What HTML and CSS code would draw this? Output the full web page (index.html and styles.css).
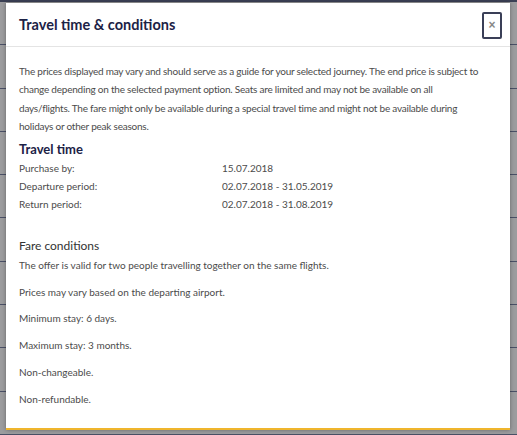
FILE: index.html
```html
<!DOCTYPE html>
<html lang="en">
<head>
<meta charset="utf-8">
<title>Travel time &amp; conditions</title>
<link rel="stylesheet" href="styles.css">
</head>
<body>
<div class="backdrop">
  <div class="bg-row"></div>
  <div class="bg-row"></div>
  <div class="bg-row"></div>
  <div class="bg-row"></div>
  <div class="bg-row"></div>
  <div class="bg-row"></div>
  <div class="bg-row"></div>
  <div class="bg-row"></div>
  <div class="bg-row"></div>
  <div class="bg-row"></div>
</div>

<div class="modal" role="dialog" aria-labelledby="modal-title">
  <header class="modal-header">
    <h1 id="modal-title" class="modal-title">Travel time &amp; conditions</h1>
    <button class="close-btn" aria-label="Close">&times;</button>
  </header>
  <div class="modal-body">
    <p class="intro">The prices displayed may vary and should serve as a guide for your selected journey. The end price is subject to<br>
    change depending on the selected payment option. Seats are limited and may not be available on all<br>
    days/flights. The fare might only be available during a special travel time and might not be available during<br>
    holidays or other peak seasons.</p>

    <h2 class="section-title">Travel time</h2>
    <dl class="dates">
      <dt>Purchase by:</dt><dd>15.07.2018</dd>
      <dt>Departure period:</dt><dd>02.07.2018 - 31.05.2019</dd>
      <dt>Return period:</dt><dd>02.07.2018 - 31.08.2019</dd>
    </dl>

    <h3 class="fare-title">Fare conditions</h3>
    <p class="cond">The offer is valid for two people travelling together on the same flights.</p>
    <p class="cond">Prices may vary based on the departing airport.</p>
    <p class="cond">Minimum stay: 6 days.</p>
    <p class="cond">Maximum stay: 3 months.</p>
    <p class="cond">Non-changeable.</p>
    <p class="cond">Non-refundable.</p>
  </div>
</div>
</body>
</html>
```

FILE: styles.css
```css
* { box-sizing: border-box; }

html, body {
  margin: 0;
  height: 100%;
}

body {
  background: #9c9c9e;
  font-family: Lato, "Liberation Sans", sans-serif;
  overflow: hidden;
  position: relative;
}

/* dimmed page behind the dialog */
.backdrop {
  display: flex;
  flex-direction: column;
  border-top: 2px solid #3b4055;
  height: 100%;
}
.bg-row {
  flex: 1;
  border-bottom: 1px solid #4a5066;
}

.modal {
  position: absolute;
  left: 6px;
  top: 3px;
  width: 504px;
  height: 427px;
  background: #fff;
  border-bottom: 2px solid #efb52d;
  box-shadow: 0 0 4px rgba(0, 0, 0, 0.35);
  display: flex;
  flex-direction: column;
}

.modal-header {
  display: flex;
  align-items: center;
  justify-content: space-between;
  height: 44px;
  padding: 0 8px 0 13px;
  border-bottom: 1px solid #e4e4e4;
}

.modal-title {
  margin: 0;
  font-size: 14.5px;
  font-weight: 700;
  color: #1c2246;
}

.close-btn {
  width: 20px;
  height: 27px;
  margin-top: 2px;
  padding: 0 0 1px;
  border: 2px solid #3a3f57;
  border-radius: 2px;
  background: #fff;
  color: #888;
  font-size: 12px;
  font-weight: 700;
  line-height: 1;
  font-family: "Liberation Sans", sans-serif;
}

.modal-body {
  padding: 15px 8px 0 13px;
  color: #4b4b4b;
  font-size: 10px;
  line-height: 18.4px;
}

.intro {
  margin: 0;
  letter-spacing: -0.22px;
}

.section-title {
  margin: 3px 0 0;
  font-size: 13px;
  font-weight: 700;
  color: #1c2246;
  line-height: 20px;
}

.dates {
  display: grid;
  grid-template-columns: 203px 1fr;
  margin: 0;
}
.dates dt, .dates dd {
  margin: 0;
}

.fare-title {
  margin: 22px 0 0;
  font-size: 12px;
  font-weight: 400;
  color: #333;
  line-height: 20px;
}

.cond {
  margin: 0 0 8.4px;
}
```
